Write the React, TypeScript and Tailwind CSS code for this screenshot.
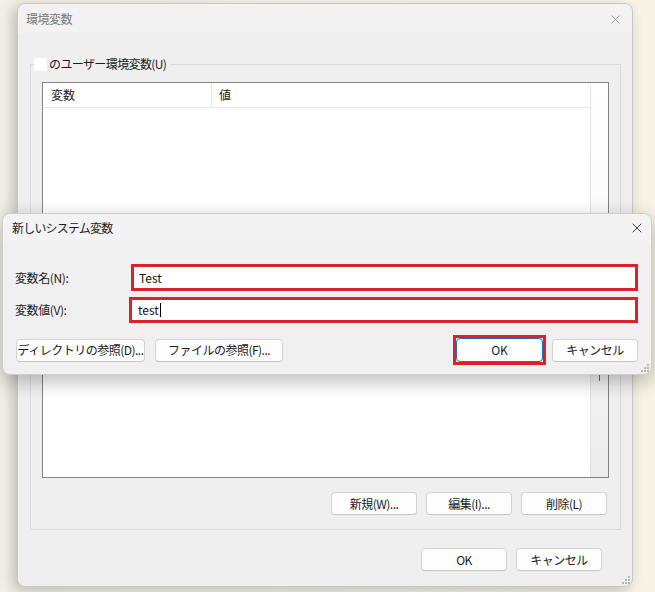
import { X } from "lucide-react";

const jp = { fontFamily: '"Noto Sans CJK JP", "Noto Sans", sans-serif' };

function Btn({ label, className = "" }: { label: string; className?: string }) {
  return (
    <div
      className={
        "flex h-[23px] items-center justify-center whitespace-nowrap rounded-[4px] border border-[#d3d3d3] border-b-[#c4c4c4] bg-[#fdfdfd] text-[12px] tracking-[-0.5px] text-[#1b1b1b] " +
        className
      }
    >
      {label}
    </div>
  );
}

function Grip() {
  return (
    <div className="grid grid-cols-3 gap-[1px]">
      <span className="h-[2px] w-[2px]" />
      <span className="h-[2px] w-[2px]" />
      <span className="h-[2px] w-[2px] bg-[#b5b5b5]" />
      <span className="h-[2px] w-[2px]" />
      <span className="h-[2px] w-[2px] bg-[#b5b5b5]" />
      <span className="h-[2px] w-[2px] bg-[#b5b5b5]" />
      <span className="h-[2px] w-[2px] bg-[#b5b5b5]" />
      <span className="h-[2px] w-[2px] bg-[#b5b5b5]" />
      <span className="h-[2px] w-[2px] bg-[#b5b5b5]" />
    </div>
  );
}

function EnvWindow() {
  return (
    <div className="absolute left-[17px] top-[3px] flex h-[584px] w-[616px] flex-col rounded-[8px] border border-[#c9c9c4] bg-[#efefef] shadow-[-4px_4px_14px_rgba(0,0,0,0.22)]">
      <div className="flex h-[30px] items-center justify-between rounded-t-[8px] bg-[#f2f2f2] pl-[8px] pr-[9px]">
        <span className="text-[12px] tracking-[-0.5px] text-[#7a7a7a]">環境変数</span>
        <X className="h-[15px] w-[15px] text-[#8a8a8a]" strokeWidth={1.2} />
      </div>

      <div className="relative ml-[12px] mr-[11px] mt-[30px] flex h-[466px] flex-col border border-[#dadada]">
        <div className="absolute -top-[8px] left-[3px] flex items-center bg-[#efefef] pr-[4px]">
          <span className="h-[13px] w-[13px] bg-white" />
          <span className="ml-[2px] text-[12px] leading-[14px] tracking-[-0.6px] text-[#1b1b1b]">のユーザー環境変数(U)</span>
        </div>

        <div className="ml-[11px] mt-[17px] flex h-[396px] w-[567px] border border-[#838383] bg-white">
          <div className="flex flex-1 flex-col">
            <div className="flex h-[25px] items-center border-b border-[#e8e8e8] text-[12px] text-[#1b1b1b]">
              <span className="w-[169px] border-r border-[#e8e8e8] pl-[8px] leading-[24px]">変数</span>
              <span className="pl-[7px]">値</span>
            </div>
          </div>
          <div className="flex w-[18px] flex-col border-l border-[#e3e3e3] bg-gradient-to-b from-white via-[#f8f8f8] to-[#ececec]">
            <div className="mt-[292px] ml-[8px] h-[6px] w-[1px] bg-[#6a6a6a]" />
          </div>
        </div>

        <div className="mr-[13px] mt-[14px] flex justify-end gap-[9px]">
          <Btn label="新規(W)..." className="w-[86px]" />
          <Btn label="編集(I)..." className="w-[86px]" />
          <Btn label="削除(L)" className="w-[86px]" />
        </div>
      </div>

      <div className="mr-[30px] mt-[18px] flex justify-end gap-[9px]">
        <Btn label="OK" className="w-[86px]" />
        <Btn label="キャンセル" className="w-[86px]" />
      </div>
      <div className="absolute bottom-[2px] right-[2px]">
        <Grip />
      </div>
    </div>
  );
}

function NewVarDialog() {
  return (
    <div className="absolute left-[2px] top-[213px] flex h-[162px] w-[650px] flex-col rounded-[8px] border border-[#cfcfcf] bg-[#f0f0f0] shadow-[0_6px_20px_rgba(0,0,0,0.28)]">
      <div className="flex h-[28px] items-center justify-between rounded-t-[8px] bg-[#f3f3f3] pl-[9px] pr-[6px]">
        <span className="text-[12px] tracking-[-0.8px] text-[#1b1b1b]">新しいシステム変数</span>
        <X className="h-[16px] w-[16px] text-[#222]" strokeWidth={1.3} />
      </div>

      <div className="mt-[22px] flex items-center pr-[13px]">
        <span className="w-[128px] pl-[12px] text-[12px] tracking-[-0.4px] text-[#1b1b1b]">変数名(N):</span>
        <div className="flex h-[27px] flex-1 items-center border-[3px] border-[#dc2229] bg-white pl-[5px] text-[12px] text-[#111]">
          Test
        </div>
      </div>
      <div className="mt-[6px] flex items-center pr-[13px]">
        <span className="w-[126px] pl-[12px] text-[12px] tracking-[-0.4px] text-[#1b1b1b]">変数値(V):</span>
        <div className="flex h-[26px] flex-1 items-center border-[3px] border-[#dc2229] bg-white pl-[6px] text-[12px] text-[#111]">
          test<span className="ml-[1px] h-[14px] w-[1px] bg-black" />
        </div>
      </div>

      <div className="mt-[12px] flex items-center pl-[13px] pr-[13px]">
        <Btn label="ディレクトリの参照(D)..." className="w-[129px]" />
        <Btn label="ファイルの参照(F)..." className="ml-[10px] w-[128px]" />
        <div className="ml-auto border-[3px] border-[#dc2229] p-0">
          <div className="flex h-[24px] w-[87px] items-center justify-center rounded-[4px] border border-[#1f6fc0] bg-[#fdfdfd] text-[12px] text-[#1b1b1b]">
            OK
          </div>
        </div>
        <Btn label="キャンセル" className="ml-[6px] w-[86px]" />
      </div>
      <div className="absolute bottom-[2px] right-[2px]">
        <Grip />
      </div>
    </div>
  );
}

export default function App() {
  return (
    <div
      className="relative h-[592px] w-[655px] overflow-hidden bg-gradient-to-r from-[#f1efe6] via-[#f4f2ea] to-[#f8f3e4]"
      style={jp}
    >
      <EnvWindow />
      <NewVarDialog />
    </div>
  );
}
